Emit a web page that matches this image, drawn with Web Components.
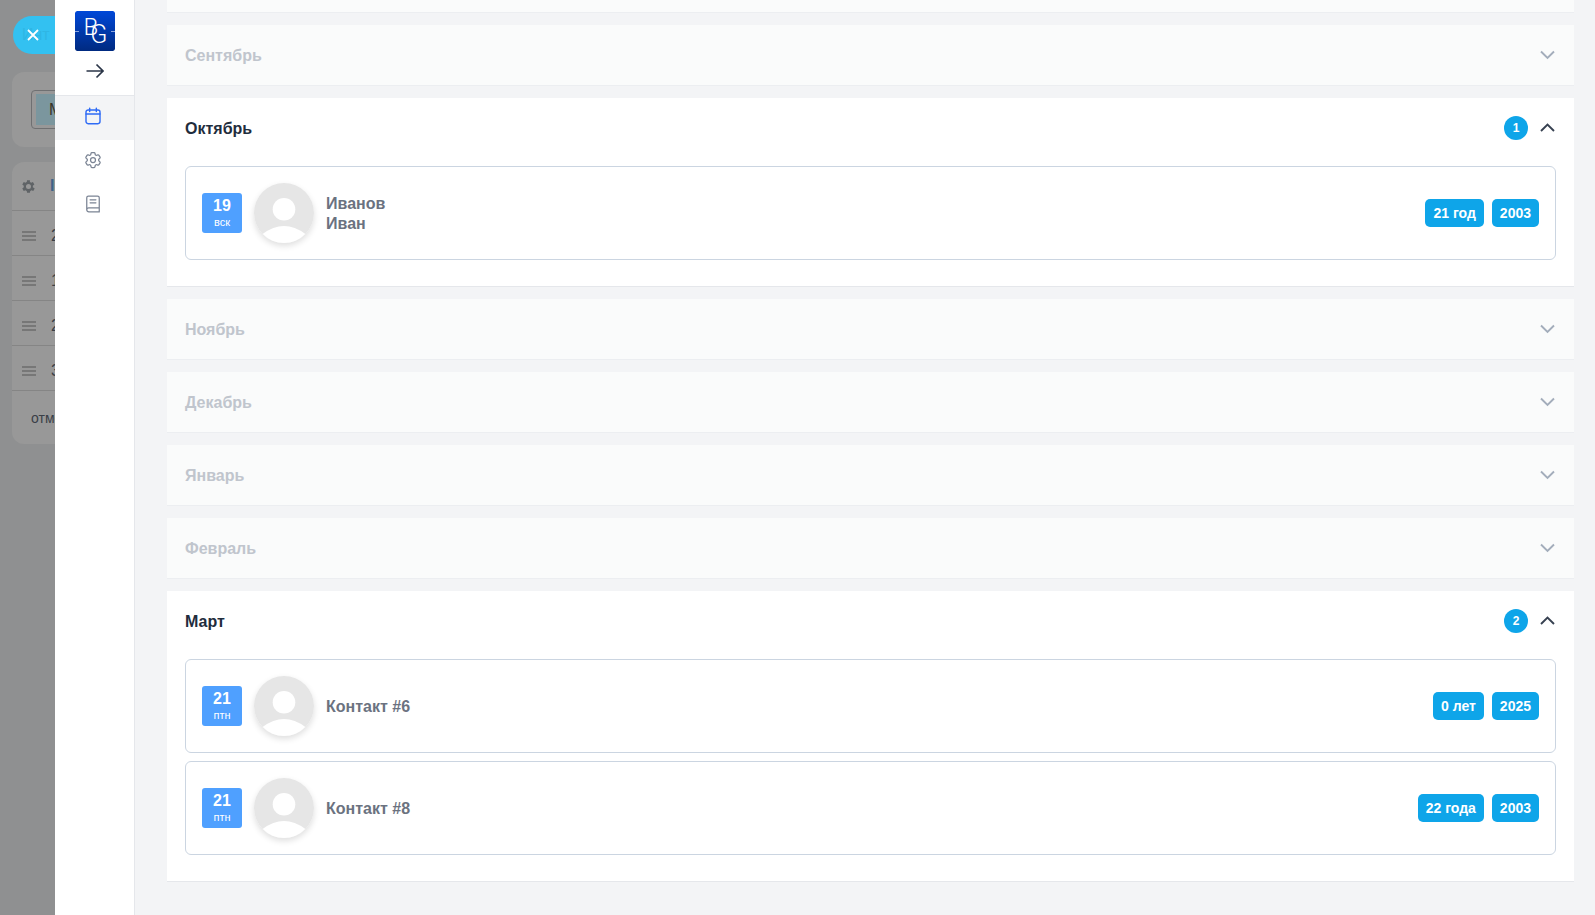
<!DOCTYPE html>
<html lang="ru">
<head>
<meta charset="utf-8">
<title>Дни рождения</title>
<style>
  html, body { margin: 0; height: 100%; overflow: hidden; }
  body { background: #f3f4f6; font-family: "Liberation Sans", Arial, sans-serif; }
</style>
</head>
<body>

<back-panel></back-panel>

<app-drawer>
  <side-nav></side-nav>
  <month-list>
    <month-item class="stub"></month-item>
    <month-item name="Сентябрь"></month-item>
    <month-item name="Октябрь" count="1" open>
      <contact-card day="19" weekday="вск" age="21 год" year="2003">Иванов<br>Иван</contact-card>
    </month-item>
    <month-item name="Ноябрь"></month-item>
    <month-item name="Декабрь"></month-item>
    <month-item name="Январь"></month-item>
    <month-item name="Февраль"></month-item>
    <month-item name="Март" count="2" open>
      <contact-card day="21" weekday="птн" age="0 лет" year="2025">Контакт #6</contact-card>
      <contact-card day="21" weekday="птн" age="22 года" year="2003">Контакт #8</contact-card>
    </month-item>
  </month-list>
</app-drawer>

<script>
// Page behind the drawer, only its left edge is visible
class BackPanel extends HTMLElement {
  constructor() {
    super();
    this.attachShadow({ mode: 'open' });
  }

  connectedCallback() {
    const rows = ['2', '1', '2', '3'];
    this.shadowRoot.innerHTML = `
      <style>
        :host { display: block; position: fixed; inset: 0; background: #8f9091; font-size: 14px; color: #3a3f47; }
        .page { padding: 16px 0 0 12px; width: 400px; }
        .close { position: relative; display: flex; align-items: center; width: 90px; height: 38px; margin-left: 1px; padding-left: 9px; box-sizing: border-box; border-radius: 19px; background: #33c1f1; color: #2fb6e4; font-size: 16px; }
        .close svg { position: absolute; left: 13px; top: 12px; }
        .box { background: #989898; border-radius: 12px; }
        .filter { height: 75px; margin-top: 18px; display: flex; align-items: center; padding-left: 19px; }
        .field { border: 1px solid #6f7072; border-radius: 4px; padding: 3px 4px; height: 31px; display: flex; }
        .field span { background: #7b969e; width: 100px; line-height: 31px; padding-left: 13px; box-sizing: border-box; font-size: 16px; color: #3a3528; }
        .list { margin-top: 15px; }
        .head { height: 49px; display: flex; align-items: center; gap: 15px; padding-left: 10px; box-sizing: border-box; border-bottom: 1px solid #858585; font-size: 16px; }
        .head b { color: #3f6288; font-weight: 700; }
        .row { height: 45px; padding: 5px 0 0 10px; display: flex; align-items: center; gap: 15px; border-bottom: 1px solid #858585; box-sizing: border-box; font-size: 16px; }
        .bars { width: 14px; height: 10px; box-sizing: border-box; border-top: 2px solid #777; border-bottom: 2px solid #777; position: relative; }
        .bars::after { content: ''; position: absolute; left: 0; right: 0; top: 2px; height: 2px; background: #777; }
        .cancel { height: 53px; padding: 1px 0 0 19px; box-sizing: border-box; display: flex; align-items: center; }
      </style>
      <div class="page">
        <div class="close">
          Инт
          <svg width="14" height="14" viewBox="0 0 14 14" fill="none" stroke="#fff" stroke-width="1.800"><path d="M2 2l10 10M12 2L2 12"/></svg>
        </div>
        <div class="box filter"><div class="field"><span>М</span></div></div>
        <div class="box list">
          <div class="head">
            <svg width="13" height="13" viewBox="4.400 3 18 18" fill="#5f6366"><path d="M19.400 13a7.500 7.500 0 0 0 0-2l2.100-1.600-2-3.500-2.500 1a7.500 7.500 0 0 0-1.700-1L15.400 3.300h-4l-.4 2.600a7.500 7.500 0 0 0-1.700 1l-2.500-1-2 3.500L6.900 11a7.500 7.500 0 0 0 0 2l-2.100 1.600 2 3.500 2.500-1a7.500 7.500 0 0 0 1.700 1l.4 2.600h4l.4-2.600a7.500 7.500 0 0 0 1.700-1l2.500 1 2-3.500zM13.400 15.500a3.500 3.500 0 1 1 0-7 3.500 3.500 0 0 1 0 7z"/></svg>
            <b>I</b>
          </div>
          ${rows.map((n) => `<div class="row"><span class="bars"></span><span>${n}</span></div>`).join('')}
          <div class="cancel">отмена</div>
        </div>
      </div>
    `;
  }
}

class AppDrawer extends HTMLElement {
  constructor() {
    super();
    this.attachShadow({ mode: 'open' });
    this.shadowRoot.innerHTML = `
      <style>
        :host { display: flex; position: fixed; top: 0; right: 0; bottom: 0; left: 55px; background: #f3f4f6; overflow: hidden; }
      </style>
      <slot></slot>
    `;
  }
}

const NAV_ICONS = {
  calendar: '<rect x="3.600" y="4.800" width="16.800" height="16.400" rx="2.500"/><path stroke-linecap="round" d="M3.600 9.500h16.800M8 2.500v4M16 2.500v4"/>',
  cog: '<path stroke-linecap="round" stroke-linejoin="round" d="M9.594 3.940c.09-.542.56-.940 1.110-.940h2.593c.550 0 1.020.398 1.110.940l.213 1.281c.063.374.313.686.645.870.074.040.147.083.220.127.324.196.720.257 1.075.124l1.217-.456a1.125 1.125 0 0 1 1.370.490l1.296 2.247a1.125 1.125 0 0 1-.260 1.431l-1.003.827c-.293.240-.438.613-.431.992a6.759 6.759 0 0 1 0 .255c-.007.378.138.750.430.990l1.005.828c.424.350.534.954.260 1.430l-1.298 2.247a1.125 1.125 0 0 1-1.369.491l-1.217-.456c-.355-.133-.750-.072-1.076.124a6.570 6.570 0 0 1-.220.128c-.331.183-.581.495-.644.869l-.213 1.280c-.090.543-.560.941-1.110.941h-2.594c-.550 0-1.020-.398-1.110-.940l-.213-1.281c-.062-.374-.312-.686-.644-.870a6.520 6.520 0 0 1-.220-.127c-.325-.196-.720-.257-1.076-.124l-1.217.456a1.125 1.125 0 0 1-1.369-.490l-1.297-2.247a1.125 1.125 0 0 1 .260-1.431l1.004-.827c.292-.240.437-.613.430-.992a6.932 6.932 0 0 1 0-.255c.007-.378-.138-.750-.430-.990l-1.004-.828a1.125 1.125 0 0 1-.260-1.430l1.297-2.247a1.125 1.125 0 0 1 1.370-.491l1.216.456c.356.133.751.072 1.076-.124.072-.044.146-.087.220-.128.332-.183.582-.495.644-.869l.214-1.281Z"/><path stroke-linecap="round" stroke-linejoin="round" d="M15 12a3 3 0 1 1-6 0 3 3 0 0 1 6 0Z"/>',
  book: '<path stroke-linecap="round" stroke-linejoin="round" d="M4.500 19V4.500a2 2 0 0 1 2-2h11a2 2 0 0 1 2 2V19M4.500 19a2.500 2.500 0 0 0 2.500 2.500h12.500V16.500H7A2.500 2.500 0 0 0 4.500 19ZM8.500 7h7M8.500 10.500h7"/>',
};

class SideNav extends HTMLElement {
  constructor() {
    super();
    this.attachShadow({ mode: 'open' });
  }

  connectedCallback() {
    this.shadowRoot.innerHTML = `
      <style>
        :host { display: block; flex: none; width: 79px; background: #fff; border-right: 1px solid #e5e7eb; }
        .logo { display: block; margin: 11px 0 0 20px; border-radius: 2px; }
        .arrow { height: 40px; margin-bottom: 4px; display: flex; align-items: center; justify-content: center; }
        .item { height: 44px; padding-right: 3px; box-sizing: border-box; display: flex; align-items: center; justify-content: center; }
        .item svg { width: 20px; height: 20px; fill: none; stroke: #7b8494; stroke-width: 1.500; }
        .item.active { height: 45px; padding-bottom: 5px; background: #f3f4f6; border-top: 1px solid #e5e7eb; }
        .item.active svg { stroke: #2f6bf5; stroke-width: 1.700; }
        .item.active + .item { margin-top: -2px; }
      </style>
      <svg class="logo" width="40" height="40" viewBox="0 0 40 40">
        <defs>
          <linearGradient id="logo-bg" x1="0" y1="0" x2="0" y2="1">
            <stop offset="0" stop-color="#0048d8"/>
            <stop offset="1" stop-color="#002a80"/>
          </linearGradient>
        </defs>
        <rect width="40" height="40" rx="2" fill="url(#logo-bg)"/>
        <path d="M0 20.500h4M36 20.500h4" stroke="#8aa5e0"/>
        <text x="8.500" y="24" fill="#fff" font-family="Roboto, sans-serif" font-weight="300" font-size="24">B<tspan dx="-8" dy="8" font-size="25">G</tspan></text>
      </svg>
      <div class="arrow">
        <svg width="18" height="18" viewBox="0 0 18 18" fill="none" stroke="#2b3648" stroke-width="1.700"><path d="M.5 9H17M10.500 2.500L17 9l-6.500 6.500"/></svg>
      </div>
      <div class="item active"><svg viewBox="0 0 24 24">${NAV_ICONS.calendar}</svg></div>
      <div class="item"><svg viewBox="0 0 24 24">${NAV_ICONS.cog}</svg></div>
      <div class="item"><svg viewBox="0 0 24 24">${NAV_ICONS.book}</svg></div>
    `;
  }
}

class MonthList extends HTMLElement {
  constructor() {
    super();
    this.attachShadow({ mode: 'open' });
    this.shadowRoot.innerHTML = `
      <style>
        :host { display: flex; flex-direction: column; flex: none; gap: 12px; width: 1407px; margin: -48px 0 0 32px; }
      </style>
      <slot></slot>
    `;
  }
}

class MonthItem extends HTMLElement {
  constructor() {
    super();
    this.attachShadow({ mode: 'open' });
  }

  connectedCallback() {
    const name = this.getAttribute('name') || '';
    const count = this.getAttribute('count');
    const open = this.hasAttribute('open');
    const chevron = open ? 'M1 8l6.500-6.500L14 8' : 'M1 1.500L7.500 8 14 1.500';

    this.shadowRoot.innerHTML = `
      <style>
        :host { display: block; background: #fff; border-bottom: 1px solid #e5e7eb; }
        :host([open]) { padding-bottom: 26px; }
        :host(:not([open])) { background: #fafbfb; border-bottom-color: #eceef1; }
        .head { height: 60px; box-sizing: border-box; padding: 0 18px; display: flex; align-items: center; justify-content: space-between; font-weight: 700; font-size: 16px; color: #c0c5cd; }
        :host([open]) .head { color: #1f2d3d; }
        .title { padding-top: 2px; }
        .right { display: flex; align-items: center; gap: 12px; }
        .count { width: 24px; height: 24px; border-radius: 50%; background: #0ea5e9; color: #fff; font-size: 12px; display: flex; align-items: center; justify-content: center; }
        svg { display: block; margin-right: 1px; fill: none; stroke: #a3adbb; stroke-width: 1.900; }
        :host([open]) svg { stroke: #374151; }
        .body { display: flex; flex-direction: column; gap: 8px; padding: 8px 18px 0; }
      </style>
      <div class="head">
        <span class="title">${name}</span>
        <span class="right">
          ${count ? `<span class="count">${count}</span>` : ''}
          <svg width="15" height="10" viewBox="0 0 15 10"><path d="${chevron}"/></svg>
        </span>
      </div>
      ${open ? '<div class="body"><slot></slot></div>' : ''}
    `;
  }
}

class ContactCard extends HTMLElement {
  constructor() {
    super();
    this.attachShadow({ mode: 'open' });
  }

  connectedCallback() {
    const day = this.getAttribute('day');
    const weekday = this.getAttribute('weekday');
    const age = this.getAttribute('age');
    const year = this.getAttribute('year');

    this.shadowRoot.innerHTML = `
      <style>
        :host { display: flex; align-items: center; height: 94px; box-sizing: border-box; padding: 0 16px; background: #fff; border: 1px solid #cbd5e1; border-radius: 6px; }
        .date { width: 40px; height: 40px; border-radius: 3px; background: #4fa0ff; color: #fff; display: flex; flex-direction: column; align-items: center; justify-content: center; }
        .date b { margin-top: 1px; font-size: 16px; line-height: 18px; }
        .date span { font-size: 11px; line-height: 15px; }
        .avatar { width: 60px; height: 60px; margin-left: 12px; flex: none; border-radius: 50%; box-shadow: 0 3px 6px rgba(0, 0, 0, .13); }
        .avatar svg { display: block; }
        .name { margin-left: 12px; padding-top: 2px; font-size: 16px; line-height: 20px; font-weight: 700; color: #6b7280; }
        .tags { margin-left: auto; display: flex; gap: 8px; }
        .tag { height: 28px; line-height: 28px; padding: 0 8px; border-radius: 5px; background: #0ea5e9; color: #fff; font-size: 14px; font-weight: 700; }
      </style>
      <div class="date"><b>${day}</b><span>${weekday}</span></div>
      <div class="avatar">
        <svg width="60" height="60" viewBox="0 0 60 60">
          <circle cx="30" cy="30" r="30" fill="#e6e6e6"/>
          <circle cx="30" cy="26.300" r="11.300" fill="#fff"/>
          <path d="M8.600 51 Q30 35 51.400 51 A30 30 0 0 1 8.600 51Z" fill="#fff"/>
        </svg>
      </div>
      <div class="name"><slot></slot></div>
      <div class="tags"><span class="tag">${age}</span><span class="tag">${year}</span></div>
    `;
  }
}

customElements.define('back-panel', BackPanel);
customElements.define('app-drawer', AppDrawer);
customElements.define('side-nav', SideNav);
customElements.define('month-list', MonthList);
customElements.define('month-item', MonthItem);
customElements.define('contact-card', ContactCard);
</script>
</body>
</html>
